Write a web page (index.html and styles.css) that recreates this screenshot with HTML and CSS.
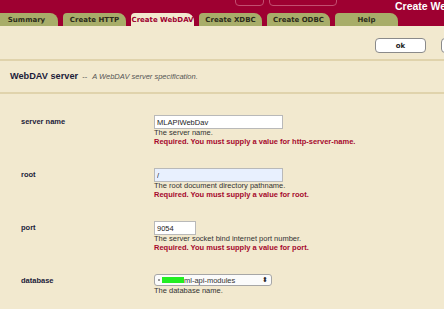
FILE: index.html
```html
<html>
  <head>
    <meta name="viewport" content="width=device-width,initial-scale=1">
    <title>Create WebDAV Server</title>
    <link rel="stylesheet" href="styles.css">
  </head>
  <body>
    <header class="masthead">
        <div class="masthead-top">
            <span class="search-box narrow"></span>
            <span class="search-box wide"></span>
            <span class="site-title">Create WebDAV Server</span>
        </div>
        <nav class="tabs">
            <a class="tab">Summary</a>
            <a class="tab">Create HTTP</a>
            <a class="tab active">Create WebDAV</a>
            <a class="tab">Create XDBC</a>
            <a class="tab">Create ODBC</a>
            <a class="tab">Help</a>
        </nav>
    </header>

    <div class="toolbar">
        <button class="btn">ok</button>
        <button class="btn">cancel</button>
    </div>

    <div class="section-head">
        <b>WebDAV server</b>
        <span class="dash">--</span>
        <i>A WebDAV server specification.</i>
    </div>

    <form class="fields">
        <div class="field">
            <label>server name</label>
            <div class="control">
                <input class="text wide" type="text" value="MLAPIWebDav">
                <p class="hint">The server name.</p>
                <p class="error">Required. You must supply a value for http-server-name.</p>
            </div>
        </div>
        <div class="field">
            <label>root</label>
            <div class="control">
                <input class="text wide filled" type="text" value="/">
                <p class="hint">The root document directory pathname.</p>
                <p class="error">Required. You must supply a value for root.</p>
            </div>
        </div>
        <div class="field">
            <label>port</label>
            <div class="control">
                <input class="text short" type="text" value="9054">
                <p class="hint">The server socket bind internet port number.</p>
                <p class="error">Required. You must supply a value for port.</p>
            </div>
        </div>
        <div class="field">
            <label>database</label>
            <div class="control">
                <div class="select">
                    <span class="dot"></span><span class="redacted"></span><span>ml-api-modules</span>
                    <span class="arrows">&#x2B0D;</span>
                </div>
                <p class="hint">The database name.</p>
            </div>
        </div>
    </form>
  </body>
</html>
```

FILE: styles.css
```css
:root {
    --crimson: #9e0031;
    --cream: #f2e9cf;
    --olive: #a8ad69;
    --rule: #e0d3ac;
    --label: #1c1c3a;
    --error: #a5082c;
}

html, body {
    margin: 0;
    padding: 0;
    width: 100%;
    height: 100%;
    overflow: hidden;
}

body {
    background-color: var(--cream);
    font-family: "Liberation Sans", Arial, sans-serif;
    white-space: nowrap;
}

/* Header with tabs */
.masthead {
    height: 26px;
    background-color: var(--crimson);
    overflow: hidden;
}

.masthead-top {
    display: flex;
    align-items: flex-start;
    height: 13px;
    padding-left: 235px;
}

.masthead-top > * {
    flex-shrink: 0;
}

.search-box {
    display: block;
    height: 14px;
    margin-top: -10px;
    margin-right: 5px;
    border: 1px solid #c24f70;
    border-radius: 4px;
}

.search-box.narrow { width: 27px; }
.search-box.wide { width: 66px; }

.site-title {
    margin-left: 53px;
    margin-top: 1px;
    color: #fff;
    font-weight: bold;
    font-size: 10.5px;
    line-height: 11px;
}

.tabs {
    display: flex;
    gap: 5px;
    margin-left: -5px;
    height: 13px;
}

.tab {
    display: block;
    flex-shrink: 0;
    width: 63px;
    height: 13px;
    line-height: 14px;
    text-align: center;
    background-color: var(--olive);
    border-radius: 4px 8px 0 0;
    font-family: "DejaVu Sans", Verdana, sans-serif;
    font-weight: bold;
    font-size: 7px;
    color: #2b2b1a;
}

.tab.active {
    background-color: var(--cream);
    color: var(--crimson);
}

/* Buttons */
.toolbar {
    display: flex;
    gap: 15px;
    height: 21px;
    padding: 12px 0 0 375px;
    border-bottom: 2px solid var(--rule);
}

.btn {
    flex-shrink: 0;
    width: 51px;
    height: 15px;
    padding: 0;
    background: #fff;
    border: 1px solid #8a8a8a;
    border-radius: 4px;
    font-family: "DejaVu Sans", Verdana, sans-serif;
    font-weight: bold;
    font-size: 7px;
    color: #222;
}

/* Section title */
.section-head {
    height: 31px;
    line-height: 31px;
    padding-left: 10px;
    border-bottom: 2px solid var(--rule);
    color: #555;
    font-size: 7.5px;
}

.section-head b {
    color: var(--label);
    font-size: 9.2px;
}

.section-head .dash {
    margin: 0 3px 0 2px;
}

/* Form rows */
.fields {
    margin: 0;
    padding: 21px 0 0 21px;
}

.field {
    display: grid;
    grid-template-columns: 133px auto;
    height: 53px;
}

.field label {
    padding-top: 2px;
    font-weight: bold;
    font-size: 7.5px;
    color: var(--label);
}

.control p {
    margin: 0;
    font-size: 7.5px;
    line-height: 8.5px;
}

.hint {
    color: #333;
}

.error {
    font-weight: bold;
    color: var(--error);
}

.text {
    display: block;
    box-sizing: border-box;
    height: 14px;
    margin: 0;
    padding: 0 2px;
    border: 1px solid #b9b9b9;
    background: #fff;
    font-family: "Liberation Sans", Arial, sans-serif;
    font-size: 7.5px;
    color: #222;
}

.text.wide { width: 129px; }
.text.short { width: 42px; }
.text.filled { background: #e8f0fe; }

.select {
    display: flex;
    align-items: center;
    box-sizing: border-box;
    width: 118px;
    height: 12px;
    margin-bottom: 1px;
    padding: 0 3px;
    border: 1px solid #a6a6a6;
    border-radius: 3px;
    background: #fbfbfb;
    font-size: 7.5px;
    color: #333;
}

.select .dot {
    width: 2px;
    height: 2px;
    margin-right: 2px;
    background: #999;
}

.select .redacted {
    width: 22px;
    height: 6px;
    background: #22ee22;
}

.select .arrows {
    margin-left: auto;
    font-size: 7px;
    color: #222;
}
```
